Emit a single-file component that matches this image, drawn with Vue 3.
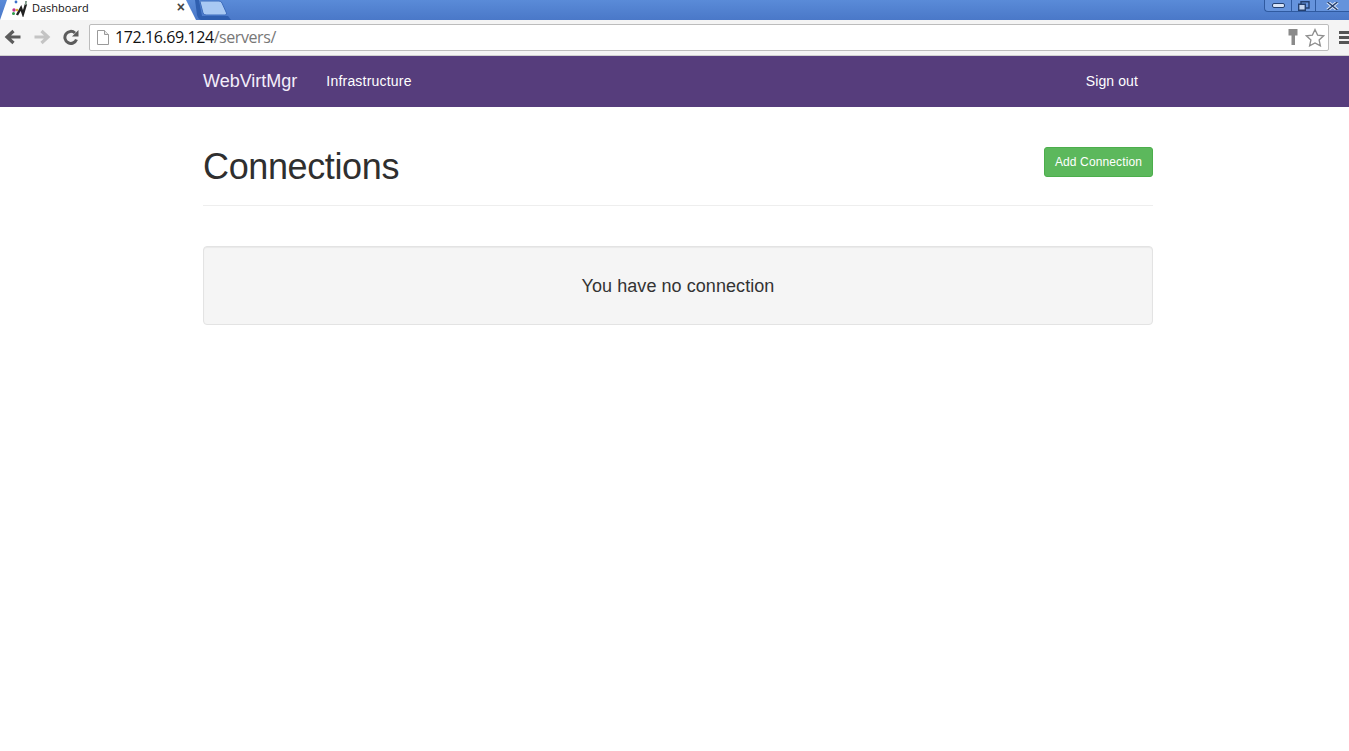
<script setup>
</script>

<template>
  <div class="page">
    <header class="chrome">
      <div class="tabstrip">
        <div class="tab">
          <svg class="favicon" width="17" height="17" viewBox="0 0 17 17">
            <path d="M6 15 L10 8 L12 14 L15 4" fill="none" stroke="#222" stroke-width="2.400" />
            <path d="M14 1 L16 1 L15.500 5 L14 5z" fill="#7f9a8a" />
            <circle cx="3" cy="10" r="1.700" fill="#c2308a" />
            <circle cx="2.500" cy="13.500" r="1.500" fill="#2a9a4a" />
            <circle cx="6" cy="10" r="1.300" fill="#e0b030" />
            <circle cx="5" cy="2" r="1.400" fill="#3b6fc9" />
          </svg>
          <span class="tab-title">Dashboard</span>
          <span class="tab-close">×</span>
        </div>
        <svg class="newtab" width="36" height="20" viewBox="0 0 36 20">
          <path d="M0 0 L4 0 L7 16 L33 16 L36 20 L6 20 Q3 19 2 15z" fill="#2f5fb0" />
          <path d="M5 1.500 Q5 1 6 1 H24 Q26 1 27 3 L31.500 13 Q32 15 30 15 H11 Q9 15 8 13z" fill="#a9c9f3" stroke="#3d6cbc" />
        </svg>
        <div class="winctl">
          <span class="wbtn wmin"><i></i></span>
          <span class="wbtn wmax">
            <svg width="13" height="10" viewBox="0 0 13 10"><path d="M4 3V.7h8v6.300h-3" fill="none" stroke="#24406f" stroke-width="1.400"/><path d="M1.700 3.200h6.600v6H1.700z" fill="#c4d6f1" stroke="#24406f" stroke-width="1.400"/></svg>
          </span>
          <span class="wbtn wclose">
            <svg width="13" height="8" viewBox="0 0 13 8"><path d="M1.500 0l10 8M11.500 0l-10 8" stroke="#dfe9f8" stroke-width="3.400"/><path d="M1.500 0l10 8M11.500 0l-10 8" stroke="#24406f" stroke-width="1.500"/></svg>
          </span>
        </div>
      </div>
      <div class="toolbar">
        <div class="navs">
          <svg width="18" height="16" viewBox="0 0 18 16"><path d="M16.500 8H4M9.500 2 3 8l6.500 6" fill="none" stroke="#5c5c5c" stroke-width="3.200"/></svg>
          <svg width="18" height="16" viewBox="0 0 18 16"><path d="M1.500 8H14M8.500 2 15 8l-6.500 6" fill="none" stroke="#c4c4c4" stroke-width="3.200"/></svg>
          <svg width="18" height="16" viewBox="0 0 18 16"><path d="M14.500 10.500A6 6 0 1 1 13 4" fill="none" stroke="#5c5c5c" stroke-width="3"/><path d="M10 7.500h6.500V1z" fill="#5c5c5c"/></svg>
        </div>
        <div class="omnibox">
          <svg class="pageicon" width="12" height="15" viewBox="0 0 12 15"><path d="M.5.5h7l4 4v10H.5z" fill="#fff" stroke="#9a9a9a"/><path d="M7.500.5v4h4" fill="#e8e8e8" stroke="#9a9a9a"/></svg>
          <span class="url"><span class="host">172.16.69.124</span><span class="path">/servers/</span></span>
          <svg class="key" width="10" height="18" viewBox="0 0 10 18"><path d="M.5 1h9v6.500H7V17H3.500V7.500H.5z" fill="#8a8a8a"/></svg>
          <svg class="star" width="20" height="19" viewBox="0 0 20 19"><path d="M10 1.500l2.600 5.600 6 .7-4.500 4.100 1.300 6L10 15l-5.400 2.900 1.300-6L1.400 7.800l6-.7z" fill="#fff" stroke="#8f8f8f" stroke-width="1.300"/></svg>
        </div>
        <div class="menu"><i></i><i></i><i></i></div>
      </div>
    </header>

    <nav class="navbar">
      <div class="container navrow">
        <a class="brand">WebVirtMgr</a>
        <a class="navlink">Infrastructure</a>
        <a class="navlink signout">Sign out</a>
      </div>
    </nav>

    <main class="container">
      <div class="page-header">
        <h1>Connections</h1>
        <button class="btn">Add Connection</button>
      </div>
      <div class="well"><span>You have no connection</span></div>
    </main>
  </div>
</template>

<style>
html, body { margin: 0; background: #fff; }
</style>

<style scoped>
.page { height: 751px; overflow: hidden; font-family: "Liberation Sans", Arial, sans-serif; color: #333; }
.chrome { height: 56px; display: flex; flex-direction: column; }
.tabstrip { height: 20px; flex: none; display: flex; align-items: flex-start; background: linear-gradient(#5a8bd8, #4a78c8); }
.tab { height: 20px; background: #fff; display: flex; align-items: flex-start; clip-path: polygon(7px 0, 186px 0, 196px 20px, 0 20px); box-sizing: border-box; padding-left: 11px; flex: none; width: 196px; }
.favicon { flex: none; }
.tab-title { font: 11px/15px "Open Sans", sans-serif; color: #111; margin-left: 4px; }
.tab-close { margin-left: auto; margin-right: 11px; font: bold 14px/15px "Liberation Sans", sans-serif; color: #444; }
.newtab { flex: none; margin-left: -1px; }
.winctl { margin-left: auto; display: flex; height: 12px; box-sizing: border-box; border: 1px solid #2f5aa0; border-top: 0; border-right: 0; border-radius: 0 0 0 4px; background: #6593dc; }
.wbtn { display: flex; align-items: center; justify-content: center; border-right: 1px solid #2f5aa0; }
.wmin { width: 26px; }
.wmin i { width: 13px; height: 5px; background: #d8e4f6; border: 1px solid #24406f; border-radius: 2px; box-sizing: border-box; }
.wmax { width: 23px; }
.wclose { width: 33px; border-right: 0; }
.toolbar { height: 36px; display: flex; align-items: center; background: #f4f4f4; box-sizing: border-box; padding: 0 0 1px 4px; border-bottom: 1px solid #d0d0d0; }
.navs { display: flex; gap: 11px; flex: none; }
.omnibox { margin-left: 9px; width: 1240px; height: 27px; box-sizing: border-box; background: #fff; border: 1px solid #bcbcbc; border-radius: 2px; display: flex; align-items: center; padding: 0 3px 0 7px; flex: none; }
.pageicon { flex: none; }
.url { font: 16px "Open Sans", sans-serif; margin-left: 6px; letter-spacing: -.42px; }
.host { color: #111; }
.path { color: #777; }
.key { margin-left: auto; }
.star { margin-left: 7px; }
.menu { margin-left: 10px; width: 12px; display: flex; flex-direction: column; gap: 2px; flex: none; }
.menu i { height: 3px; background: #555; }
.container { width: 950px; margin-left: 203px; }
.navbar { height: 51px; background: #563d7c; }
.navrow { display: flex; align-items: center; height: 50px; }
.brand { font-size: 18px; color: #f3eefa; margin-top: 1px; }
.navlink { font-size: 14px; color: #fff; margin-left: 29px; letter-spacing: .2px; }
.signout { margin-left: auto; margin-right: 15px; letter-spacing: .1px; }
.page-header { height: 99px; box-sizing: border-box; display: flex; justify-content: space-between; align-items: flex-start; border-bottom: 1px solid #eee; margin-bottom: 40px; padding-top: 40px; }
h1 { margin: 0; font-size: 36px; font-weight: 400; line-height: 40px; color: #2f2f2f; letter-spacing: -.37px; }
.btn { height: 30px; width: 109px; box-sizing: border-box; padding: 0; border: 1px solid #4cae4c; border-radius: 3px; background: #5cb85c; color: #fff; font: 12px "Liberation Sans", sans-serif; letter-spacing: .13px; }
.well { height: 79px; width: 950px; box-sizing: border-box; padding-top: 1px; background: #f5f5f5; border: 1px solid #e3e3e3; border-radius: 4px; box-shadow: inset 0 1px 1px rgba(0,0,0,.05); display: flex; align-items: center; justify-content: center; font-size: 18px; color: #333; letter-spacing: .06px; }
</style>
